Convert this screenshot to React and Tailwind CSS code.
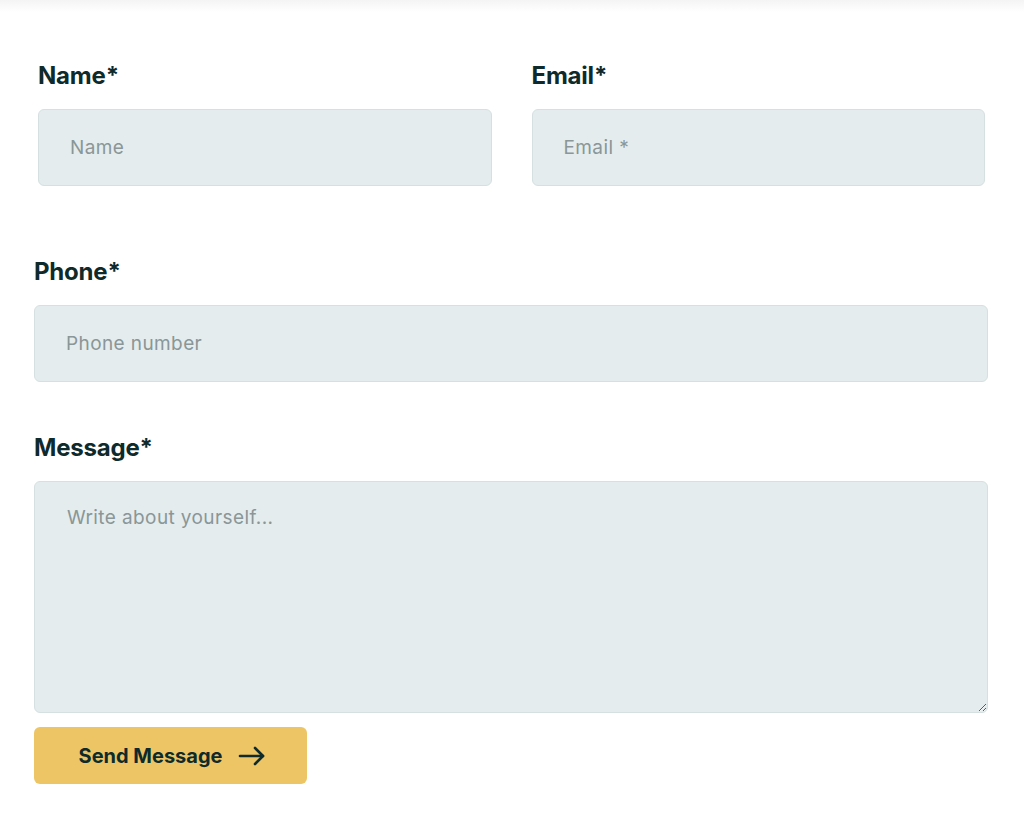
import { useState } from "react";

// Contact form: two-column name/email, then phone, message and submit
function Field({ label, children, className = "" }) {
  return (
    <div className={className}>
      <label className="block text-[24px] leading-8 font-bold text-[#0e2a2b] tracking-[-0.2px] mb-[17px]">
        {label}
      </label>
      {children}
    </div>
  );
}

const inputCls =
  "block w-full h-[77px] rounded-[6px] border border-[#d6e0e1] bg-[#e4ecee] px-[31px] text-[19px] tracking-[0.4px] text-[#0e2a2b] placeholder:text-[#8a9697] outline-none";

export default function App() {
  const [form, setForm] = useState({ name: "", email: "", phone: "", message: "" });

  function update(key) {
    return (e) => setForm({ ...form, [key]: e.target.value });
  }

  return (
    <div className="min-h-screen bg-white" style={{ fontFamily: "Inter, 'Liberation Sans', sans-serif" }}>
      <div className="h-[12px] bg-gradient-to-b from-[#f4f4f4] to-white" />
      <form className="pl-[34px] pr-[36px] pt-[48px]" onSubmit={(e) => e.preventDefault()}>
        <div className="grid grid-cols-2 gap-x-[40px] pl-[4px] pr-[3px]">
          <Field label="Name*">
            <input className={inputCls} placeholder="Name" value={form.name} onChange={update("name")} />
          </Field>
          <Field label="Email*">
            <input className={inputCls} placeholder="Email *" value={form.email} onChange={update("email")} />
          </Field>
        </div>

        <Field label="Phone*" className="mt-[70px]">
          <input className={inputCls} placeholder="Phone number" value={form.phone} onChange={update("phone")} />
        </Field>

        <Field label="Message*" className="mt-[50px]">
          <textarea
            className="block w-full h-[232px] rounded-[6px] border border-[#d6e0e1] bg-[#e4ecee] px-[32px] pt-[22px] text-[19px] tracking-[0.4px] text-[#0e2a2b] placeholder:text-[#8a9697] outline-none"
            placeholder="Write about yourself..."
            value={form.message}
            onChange={update("message")}
          />
        </Field>

        <button
          type="submit"
          className="mt-[14px] flex items-center justify-center gap-[16px] pl-[4px] w-[273px] h-[57px] rounded-[6px] bg-[#edc564] text-[20px] font-bold text-[#0e2a2b]"
        >
          Send Message
          <svg width="28" height="20" viewBox="0 0 28 20" fill="none" stroke="#0e2a2b" strokeWidth="2.6" strokeLinecap="round" strokeLinejoin="round">
            <path d="M2 10h23" />
            <path d="M17 2l8 8-8 8" />
          </svg>
        </button>
      </form>
    </div>
  );
}
